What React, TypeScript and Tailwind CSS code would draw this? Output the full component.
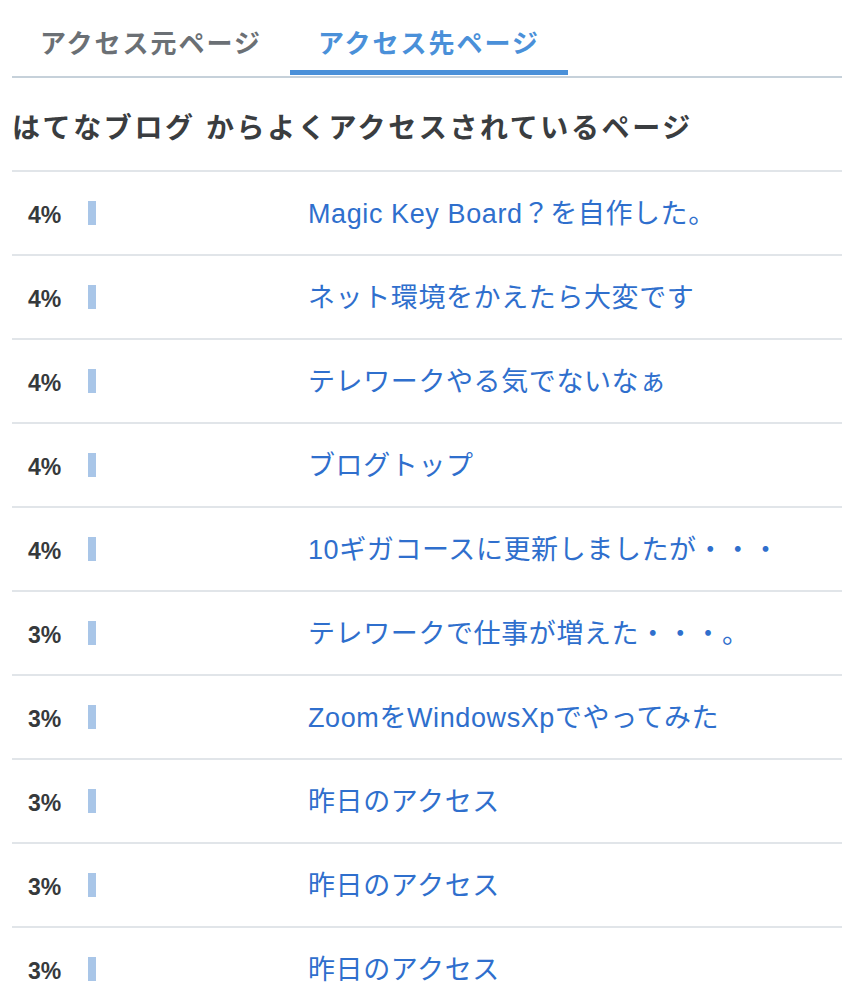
import React from "react";

const rows: { pct: string; title: string }[] = [
  { pct: "4%", title: "Magic Key Board？を自作した。" },
  { pct: "4%", title: "ネット環境をかえたら大変です" },
  { pct: "4%", title: "テレワークやる気でないなぁ" },
  { pct: "4%", title: "ブログトップ" },
  { pct: "4%", title: "10ギガコースに更新しましたが・・・" },
  { pct: "3%", title: "テレワークで仕事が増えた・・・。" },
  { pct: "3%", title: "ZoomをWindowsXpでやってみた" },
  { pct: "3%", title: "昨日のアクセス" },
  { pct: "3%", title: "昨日のアクセス" },
  { pct: "3%", title: "昨日のアクセス" },
];

export default function App() {
  return (
    <div
      className="w-[842px] h-[1008px] overflow-hidden bg-white pl-[12px]"
      style={{ fontFamily: '"Liberation Sans", "Noto Sans CJK JP", sans-serif' }}
    >
      <div className="flex border-b-2 border-[#c6d1da] pb-px">
        <div className="flex h-[75px] w-[278px] items-center justify-center border-b-[5px] border-transparent pt-[18px] text-[26px] font-bold tracking-[2px] text-[#6b7075]">
          アクセス元ページ
        </div>
        <div className="flex h-[75px] w-[278px] items-center justify-center border-b-[5px] border-[#4a90d9] pt-[18px] text-[26px] font-bold tracking-[2px] text-[#4a90d9]">
          アクセス先ページ
        </div>
      </div>
      <div className="border-b-2 border-[#e1e5e9] pt-[31px] pb-[21px] text-[28px] font-bold leading-[40px] tracking-[2.6px] text-[#3a3d40]">
        はてなブログ からよくアクセスされているページ
      </div>
      {rows.map((r, i) => (
        <div
          key={i}
          className="flex h-[84px] items-center border-b-2 border-[#e1e5e9]"
        >
          <div className="w-[76px] pl-[16px] pt-[4px] text-[23px] font-bold text-[#36393c]">
            {r.pct}
          </div>
          <div className="w-[220px]">
            <div className="h-[24px] w-[8px] bg-[#a9c6e8]" />
          </div>
          <div className="pt-[2px] text-[27px] leading-[36px] tracking-[0.6px] text-[#2f6fcd]">
            {r.title}
          </div>
        </div>
      ))}
    </div>
  );
}
